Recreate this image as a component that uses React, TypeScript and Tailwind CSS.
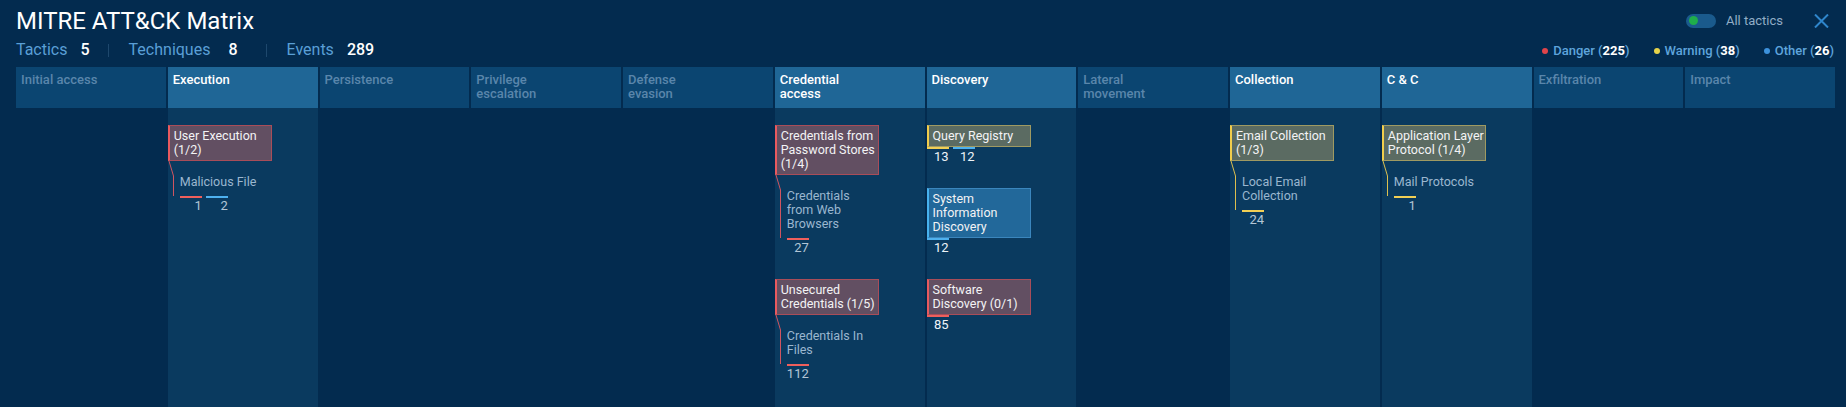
import React from 'react';

type Severity = 'danger' | 'warning' | 'other';

type Count = { sev: Severity; n: number };

type SubTechnique = { lines: string[]; counts: Count[] };

type Technique = {
  lines: string[];
  sev: Severity;
  counts?: Count[];
  sub?: SubTechnique;
};

type Tactic = { name: string; techniques?: Technique[] };

const sevStyle: Record<Severity, { card: string; bar: string; line: string; stroke: string }> = {
  danger: {
    card: 'bg-[#624f62] border-[#a94d59] border-l-[#e85a5f]',
    bar: 'border-[#ef5f5c]',
    line: 'bg-[#cf5560]',
    stroke: '#cf5560',
  },
  warning: {
    card: 'bg-[#5b6b62] border-[#9f9a62] border-l-[#f0cd4c]',
    bar: 'border-[#f1cf55]',
    line: 'bg-[#dcbf4f]',
    stroke: '#dcbf4f',
  },
  other: {
    card: 'bg-[#22689a] border-[#3b86bd] border-l-[#47b2ef]',
    bar: 'border-[#4eb1ef]',
    line: 'bg-[#47b2ef]',
    stroke: '#47b2ef',
  },
};

const tactics: Tactic[] = [
  { name: 'Initial access' },
  {
    name: 'Execution',
    techniques: [
      {
        lines: ['User Execution', '(1/2)'],
        sev: 'danger',
        sub: {
          lines: ['Malicious File'],
          counts: [
            { sev: 'danger', n: 1 },
            { sev: 'other', n: 2 },
          ],
        },
      },
    ],
  },
  { name: 'Persistence' },
  { name: 'Privilege\nescalation' },
  { name: 'Defense\nevasion' },
  {
    name: 'Credential\naccess',
    techniques: [
      {
        lines: ['Credentials from', 'Password Stores', '(1/4)'],
        sev: 'danger',
        sub: { lines: ['Credentials', 'from Web', 'Browsers'], counts: [{ sev: 'danger', n: 27 }] },
      },
      {
        lines: ['Unsecured', 'Credentials (1/5)'],
        sev: 'danger',
        sub: { lines: ['Credentials In', 'Files'], counts: [{ sev: 'danger', n: 112 }] },
      },
    ],
  },
  {
    name: 'Discovery',
    techniques: [
      {
        lines: ['Query Registry'],
        sev: 'warning',
        counts: [
          { sev: 'warning', n: 13 },
          { sev: 'other', n: 12 },
        ],
      },
      {
        lines: ['System', 'Information', 'Discovery'],
        sev: 'other',
        counts: [{ sev: 'other', n: 12 }],
      },
      {
        lines: ['Software', 'Discovery (0/1)'],
        sev: 'danger',
        counts: [{ sev: 'danger', n: 85 }],
      },
    ],
  },
  { name: 'Lateral\nmovement' },
  {
    name: 'Collection',
    techniques: [
      {
        lines: ['Email Collection', '(1/3)'],
        sev: 'warning',
        sub: { lines: ['Local Email', 'Collection'], counts: [{ sev: 'warning', n: 24 }] },
      },
    ],
  },
  {
    name: 'C & C',
    techniques: [
      {
        lines: ['Application Layer', 'Protocol (1/4)'],
        sev: 'warning',
        sub: { lines: ['Mail Protocols'], counts: [{ sev: 'warning', n: 1 }] },
      },
    ],
  },
  { name: 'Exfiltration' },
  { name: 'Impact' },
];

const Counts = ({ counts, dim }: { counts: Count[]; dim?: boolean }) => (
  <div className="flex gap-1">
    {counts.map((c, i) => (
      <div
        key={i}
        className={`w-[22px] border-t-2 text-right text-[13px] leading-[16px] ${sevStyle[c.sev].bar} ${
          dim ? 'text-[#b3c6d6]' : 'text-[#eef3f8]'
        }`}
      >
        {c.n}
      </div>
    ))}
  </div>
);

const TechniqueBlock = ({ t }: { t: Technique }) => {
  const s = sevStyle[t.sev];
  return (
    <div>
      <div className={`w-[104px] border border-l-2 pl-[4px] pr-[2px] py-[3px] text-[12.5px] leading-[14px] text-[#f3f3f5] whitespace-nowrap ${s.card}`}>
        {t.lines.map(l => (
          <div key={l}>{l}</div>
        ))}
      </div>
      {t.counts && <Counts counts={t.counts} />}
      {t.sub && (
        <>
          <div className="relative pl-3 pt-[14px] pb-[7px]">
            <svg className="absolute left-0 top-0" width="7" height="15" viewBox="0 0 7 15">
              <line x1="1" y1="0" x2="5.5" y2="15" stroke={s.stroke} strokeWidth="1" />
            </svg>
            <div className={`absolute left-[5px] top-[15px] bottom-0 w-px ${s.line}`} />
            <div className="text-[12.5px] leading-[14px] text-[#9bb7cf] whitespace-nowrap">
              {t.sub.lines.map(l => (
                <div key={l}>{l}</div>
              ))}
            </div>
          </div>
          <div className="pl-3">
            <Counts counts={t.sub.counts} dim />
          </div>
        </>
      )}
    </div>
  );
};

const TacticColumn = ({ tactic }: { tactic: Tactic }) => {
  const active = !!tactic.techniques;
  return (
    <div className="flex flex-col min-w-0">
      <div
        className={`h-[41px] px-[5px] pt-[6px] text-[13px] leading-[14px] font-medium whitespace-pre-line ${
          active ? 'bg-[#1f6696] text-white' : 'bg-[#0b4571] text-[#5a86ab]'
        }`}
      >
        {tactic.name}
      </div>
      <div className={`flex-1 flex flex-col gap-[23px] pt-[17px] ${active ? 'bg-[#0a3a5f]' : ''}`}>
        {tactic.techniques?.map((t, i) => (
          <TechniqueBlock key={i} t={t} />
        ))}
      </div>
    </div>
  );
};

const Stat = ({ label, value, gap }: { label: string; value: number; gap: string }) => (
  <div className="flex items-center">
    <span className="text-[#5a9fd6]">{label}</span>
    <span className={`${gap} font-medium text-white`}>{value}</span>
  </div>
);

const LegendItem = ({ dot, label, value }: { dot: string; label: string; value: number }) => (
  <div className="flex items-center">
    <span className={`w-[6px] h-[6px] rounded-full ${dot}`} />
    <span className="ml-[5px] font-medium text-[#5ea4dc]">
      {label} (<span className="font-bold text-white">{value}</span>)
    </span>
  </div>
);

export default function App() {
  return (
    <div className="h-[407px] w-full overflow-hidden bg-[#032b4f] flex flex-col font-['Roboto','Liberation_Sans',sans-serif]">
      <div className="flex justify-between pl-4 pr-[11px]">
        <div>
          <div className="pt-[7px] text-[24px] leading-[28px] text-white">MITRE ATT&amp;CK Matrix</div>
          <div className="mt-[5px] mb-[7px] flex items-center h-[20px] text-[16px]">
            <Stat label="Tactics" value={5} gap="ml-[13px]" />
            <span className="ml-[18px] mr-5 w-px h-[13px] bg-[#1e486d]" />
            <Stat label="Techniques" value={8} gap="ml-[18px]" />
            <span className="ml-[28px] mr-5 w-px h-[13px] bg-[#1e486d]" />
            <Stat label="Events" value={289} gap="ml-[13px]" />
          </div>
        </div>
        <div className="flex flex-col items-end pt-[13px]">
          <div className="flex items-center h-[15px]">
            <div className="w-[30px] h-[14px] rounded-full bg-[#1a5a8c] flex items-center">
              <span className="ml-[3px] w-[9px] h-[9px] rounded-full bg-[#1fae4b]" />
            </div>
            <span className="ml-[10px] text-[13px] text-[#91adc6]">All tactics</span>
            <svg className="ml-[31px] mr-[6px]" width="15" height="14" viewBox="0 0 15 14">
              <path d="M1 0.5 L14 13.5 M14 0.5 L1 13.5" stroke="#2f86cc" strokeWidth="2" fill="none" />
            </svg>
          </div>
          <div className="mt-[15px] mr-[1px] flex items-center gap-6 text-[13px] leading-[16px]">
            <LegendItem dot="bg-[#e0444a]" label="Danger" value={225} />
            <LegendItem dot="bg-[#e6d34a]" label="Warning" value={38} />
            <LegendItem dot="bg-[#3d92dc]" label="Other" value={26} />
          </div>
        </div>
      </div>
      <div className="flex-1 grid grid-cols-12 gap-[2px] pl-4 pr-[11px]">
        {tactics.map(t => (
          <TacticColumn key={t.name} tactic={t} />
        ))}
      </div>
    </div>
  );
}
